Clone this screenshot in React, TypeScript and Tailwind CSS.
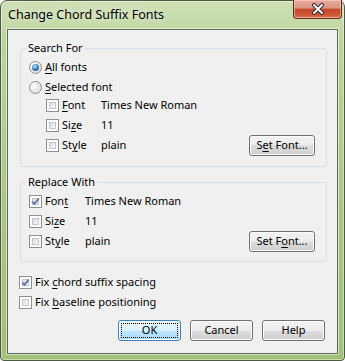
import type { ReactNode } from 'react'

const ui = "font-['Noto_Sans',sans-serif] text-[11px] text-black"

function U({ c }: { c: string }) {
  return <span className="underline decoration-1 underline-offset-[2px]">{c}</span>
}

function Check({ on = false }: { on?: boolean }) {
  return (
    <span className="relative w-[13px] h-[13px] shrink-0 border border-[#8e8f8f] bg-white p-[2px] flex">
      <span className="flex-1 border border-[#c3c6ca] bg-gradient-to-br from-[#d9dce0] to-[#f7f7f7]" />
      {on && (
        <svg className="absolute inset-0" width="11" height="11" viewBox="0 0 11 11">
          <path d="M2.2 5.6 L4.4 7.9 L8.8 2.6" fill="none" stroke="#6273a8" strokeWidth="1.8" />
        </svg>
      )}
    </span>
  )
}

function Radio({ on = false }: { on?: boolean }) {
  return (
    <span className="w-[13px] h-[13px] shrink-0 rounded-full border border-[#8e8f8f] bg-[radial-gradient(circle_at_35%_35%,#ffffff,#d2d2d2)] flex items-center justify-center">
      {on && (
        <span className="w-[7px] h-[7px] rounded-full bg-[radial-gradient(circle_at_40%_35%,#b6e6fb,#2e76b8_55%,#174a7e)]" />
      )}
    </span>
  )
}

function Row({ box, children, right }: { box: ReactNode; children: ReactNode; right?: ReactNode }) {
  return (
    <div className="flex items-center h-[20px]">
      {box}
      <span className="ml-[3px] whitespace-pre">{children}</span>
      {right && <div className="ml-auto flex items-center">{right}</div>}
    </div>
  )
}

function Btn({ children, def = false, w = 'w-[63px]' }: { children: ReactNode; def?: boolean; w?: string }) {
  return (
    <button
      className={
        def
          ? `${w} h-[21px] rounded-[3px] border border-[#3c7fb1] bg-[linear-gradient(to_bottom,#eaf6fd_0%,#d9f0fc_50%,#bee6fd_50%,#a7d9f5_100%)] shadow-[inset_0_0_0_1px_#f4fbff] outline-1 outline-dotted outline-black -outline-offset-4 flex items-center justify-center`
          : `${w} h-[21px] rounded-[3px] border border-[#707070] bg-[linear-gradient(to_bottom,#f2f2f2_0%,#ebebeb_50%,#dddddd_50%,#cfcfcf_100%)] shadow-[inset_0_0_0_1px_#fcfcfc] flex items-center justify-center`
      }
    >
      <span className="whitespace-pre">{children}</span>
    </button>
  )
}

export default function App() {
  return (
    <div className={`${ui} w-[345px] h-[361px] bg-white`}>
      <div className="w-[345px] h-[361px] flex flex-col rounded-t-[7px] rounded-b-[4px] border border-[#4e5b43] bg-[linear-gradient(to_bottom,#cfe0b6_0%,#bcd49a_12%,#aac681_60%,#a3c177_100%)] shadow-[inset_0_0_0_1px_rgba(255,255,255,0.45)]">
        {/* Title bar */}
        <div className="h-[28px] flex items-start justify-between">
          <span className="ml-[7px] mt-[6px] text-[12.5px] leading-[16px] [text-shadow:0_0_6px_#ffffff]">
            Change Chord Suffix Fonts
          </span>
          <div className="mr-[2px] -mt-[1px] w-[49px] h-[19px] rounded-b-[4px] border border-t-0 border-[#5e2a22] bg-[linear-gradient(to_bottom,#e6aa9a_0%,#d99582_45%,#c6472c_52%,#cf5b3a_85%,#e07a55_100%)] shadow-[inset_0_0_0_1px_rgba(255,220,210,0.5)] flex items-center justify-center">
            <svg width="14" height="12" viewBox="0 0 14 12">
              <path d="M3 2 L11 10 M11 2 L3 10" stroke="#3b2a2a" strokeWidth="4" strokeLinecap="round" />
              <path d="M3 2 L11 10 M11 2 L3 10" stroke="#ffffff" strokeWidth="2" strokeLinecap="round" />
            </svg>
          </div>
        </div>

        {/* Client area */}
        <div className="mx-[6px] h-[325px] border border-[#5f6a5b] bg-[#f0f0f0] shadow-[0_0_0_1px_rgba(255,255,255,0.5)] pt-[10px] pl-[12px] pr-[10px]">
          {/* Search For */}
          <fieldset className="border border-[#d5dfe5] rounded-[3px] pl-[5px] pr-[11px] pt-[1px] pb-[11px]">
            <legend className="px-[2px] leading-[16px]">Search For</legend>
            <div className="pl-[3px]">
              <Row box={<Radio on />}>
                <U c="A" />ll fonts
              </Row>
              <Row box={<Radio />}>
                <U c="S" />elected font
              </Row>
              <div className="-mt-[2px] pl-[17px]">
                <Row box={<Check />}>
                  <span className="inline-block w-[39px]">
                    <U c="F" />ont
                  </span>
                  Times New Roman
                </Row>
                <Row box={<Check />}>
                  <span className="inline-block w-[39px]">
                    Si<U c="z" />e
                  </span>
                  11
                </Row>
                <Row
                  box={<Check />}
                  right={
                    <Btn w="w-[66px]">
                      S<U c="e" />t Font...
                    </Btn>
                  }
                >
                  <span className="inline-block w-[39px]">
                    St<U c="y" />le
                  </span>
                  plain
                </Row>
              </div>
            </div>
          </fieldset>

          {/* Replace With */}
          <fieldset className="mt-[7px] border border-[#d5dfe5] rounded-[3px] pl-[5px] pr-[11px] pt-[1px] pb-[10px]">
            <legend className="px-[2px] leading-[16px]">Replace With</legend>
            <div className="pl-[3px]">
              <Row box={<Check on />}>
                <span className="inline-block w-[40px]">
                  Fon<U c="t" />
                </span>
                Times New Roman
              </Row>
              <Row box={<Check />}>
                <span className="inline-block w-[40px]">
                  Si<U c="z" />e
                </span>
                11
              </Row>
              <Row
                box={<Check />}
                right={
                  <Btn w="w-[66px]">
                    Set F<U c="o" />nt...
                  </Btn>
                }
              >
                <span className="inline-block w-[40px]">
                  St<U c="y" />le
                </span>
                plain
              </Row>
            </div>
          </fieldset>

          <div className="mt-[10px] -ml-[1px]">
            <Row box={<Check on />}>
              Fix <U c="c" />hord suffix spacing
            </Row>
            <Row box={<Check />}>
              Fix <U c="b" />aseline positioning
            </Row>
          </div>

          <div className="mt-[8px] mr-[2px] flex justify-end gap-[9px]">
            <Btn def>OK</Btn>
            <Btn>Cancel</Btn>
            <Btn>Help</Btn>
          </div>
        </div>
      </div>
    </div>
  )
}
